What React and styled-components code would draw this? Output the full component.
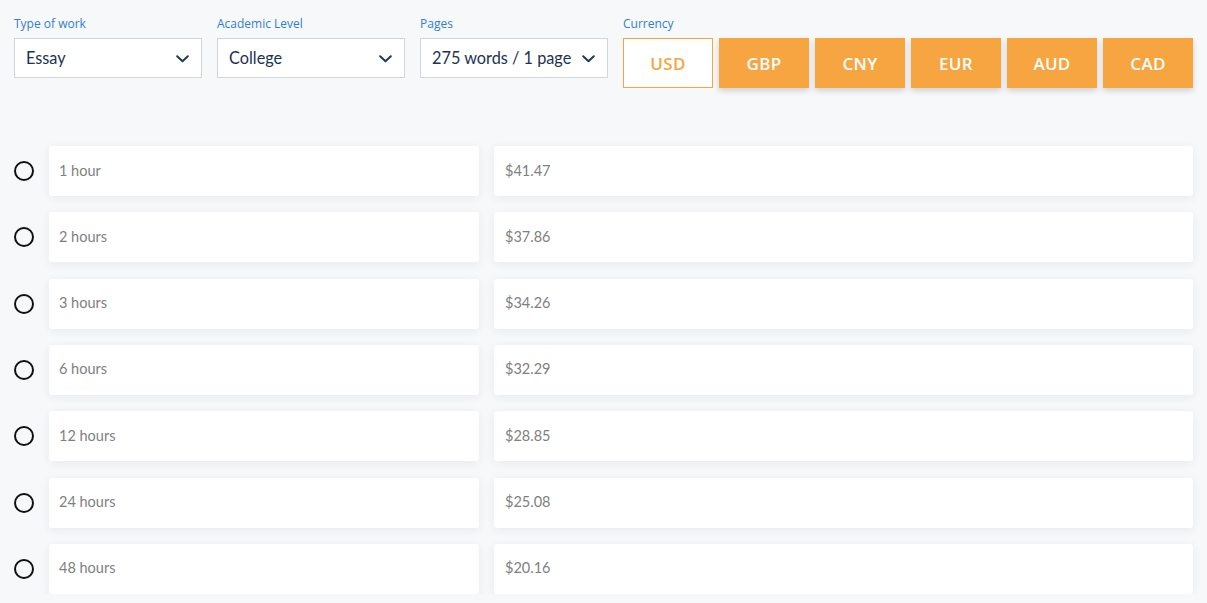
import React from "react";
import styled, { createGlobalStyle } from "styled-components";

const Global = createGlobalStyle`
  html, body { margin: 0; padding: 0; background: #f7f8fa; }
  body { font-family: "Open Sans", "Liberation Sans", sans-serif; }
  * { box-sizing: border-box; }
`;

const Page = styled.div`
  padding: 16px 14px 0 14px;
`;

const Header = styled.div`
  display: flex;
  gap: 15px;
  align-items: flex-start;
`;

const Field = styled.div`
  display: flex;
  flex-direction: column;
  width: ${(p) => (p.$wide ? "auto" : "188px")};
`;

const Label = styled.div`
  font-family: "Open Sans", sans-serif;
  font-size: 12px;
  line-height: 16px;
  color: #2f7fd6;
  margin-bottom: 6px;
`;

const SelectBox = styled.div`
  height: 40px;
  background: #fff;
  border: 1px solid #d2d6dc;
  display: flex;
  align-items: center;
  justify-content: space-between;
  padding: 0 11px 2px 11px;
  font-family: Lato, "Open Sans", sans-serif;
  font-size: 16.3px;
  color: #1b3452;
`;

const ChevronWrap = styled.span`
  display: flex;
  padding-top: 3px;
  margin-right: 1px;
`;

const Chevron = () => (
  <ChevronWrap>
    <svg width="13" height="8" viewBox="0 0 13 8" fill="none">
      <path d="M1.2 1.2 L6.5 6.3 L11.8 1.2" stroke="#1d3c5c" strokeWidth="2" strokeLinecap="round" strokeLinejoin="round" />
    </svg>
  </ChevronWrap>
);

const Currencies = styled.div`
  display: flex;
  gap: 6px;
`;

const CurrencyButton = styled.button`
  width: 90px;
  height: 50px;
  border: 1px solid #f6a540;
  background: ${(p) => (p.$active ? "#fff" : "#f6a540")};
  color: ${(p) => (p.$active ? "#f6a540" : "#fff")};
  box-shadow: ${(p) => (p.$active ? "none" : "0 3px 6px rgba(0,0,0,0.16)")};
  font-family: "Open Sans", sans-serif;
  font-weight: 600;
  font-size: 17px;
  letter-spacing: 0.3px;
  padding: 0;
  cursor: pointer;
`;

const Rows = styled.div`
  margin-top: 58px;
  display: flex;
  flex-direction: column;
  gap: 16.33px;
`;

const Row = styled.div`
  display: flex;
  align-items: center;
  gap: 15px;
`;

const Radio = styled.span`
  width: 20px;
  height: 20px;
  border: 2px solid #111;
  border-radius: 50%;
  flex: none;
`;

const Card = styled.div`
  height: 50px;
  background: #fff;
  border-radius: 3px;
  box-shadow: 0 2px 10px rgba(30, 40, 60, 0.07);
  display: flex;
  align-items: center;
  padding: 0 0 2px ${(p) => (p.$price ? "11px" : "10px")};
  font-family: Lato, "Open Sans", sans-serif;
  font-size: 14.5px;
  color: #808080;
  width: ${(p) => (p.$price ? "auto" : "430px")};
  flex: ${(p) => (p.$price ? "1" : "none")};
`;

const fields = [
  { label: "Type of work", value: "Essay" },
  { label: "Academic Level", value: "College" },
  { label: "Pages", value: "275 words / 1 page" },
];

const currencies = ["USD", "GBP", "CNY", "EUR", "AUD", "CAD"];

const rows = [
  ["1 hour", "$41.47"],
  ["2 hours", "$37.86"],
  ["3 hours", "$34.26"],
  ["6 hours", "$32.29"],
  ["12 hours", "$28.85"],
  ["24 hours", "$25.08"],
  ["48 hours", "$20.16"],
];

export default function App() {
  return (
    <>
      <Global />
      <Page>
        <Header>
          {fields.map((f) => (
            <Field key={f.label}>
              <Label>{f.label}</Label>
              <SelectBox>
                <span>{f.value}</span>
                <Chevron />
              </SelectBox>
            </Field>
          ))}
          <Field $wide>
            <Label>Currency</Label>
            <Currencies>
              {currencies.map((c, i) => (
                <CurrencyButton key={c} $active={i === 0}>
                  {c}
                </CurrencyButton>
              ))}
            </Currencies>
          </Field>
        </Header>
        <Rows>
          {rows.map(([t, p]) => (
            <Row key={t}>
              <Radio />
              <Card>{t}</Card>
              <Card $price>{p}</Card>
            </Row>
          ))}
        </Rows>
      </Page>
    </>
  );
}
